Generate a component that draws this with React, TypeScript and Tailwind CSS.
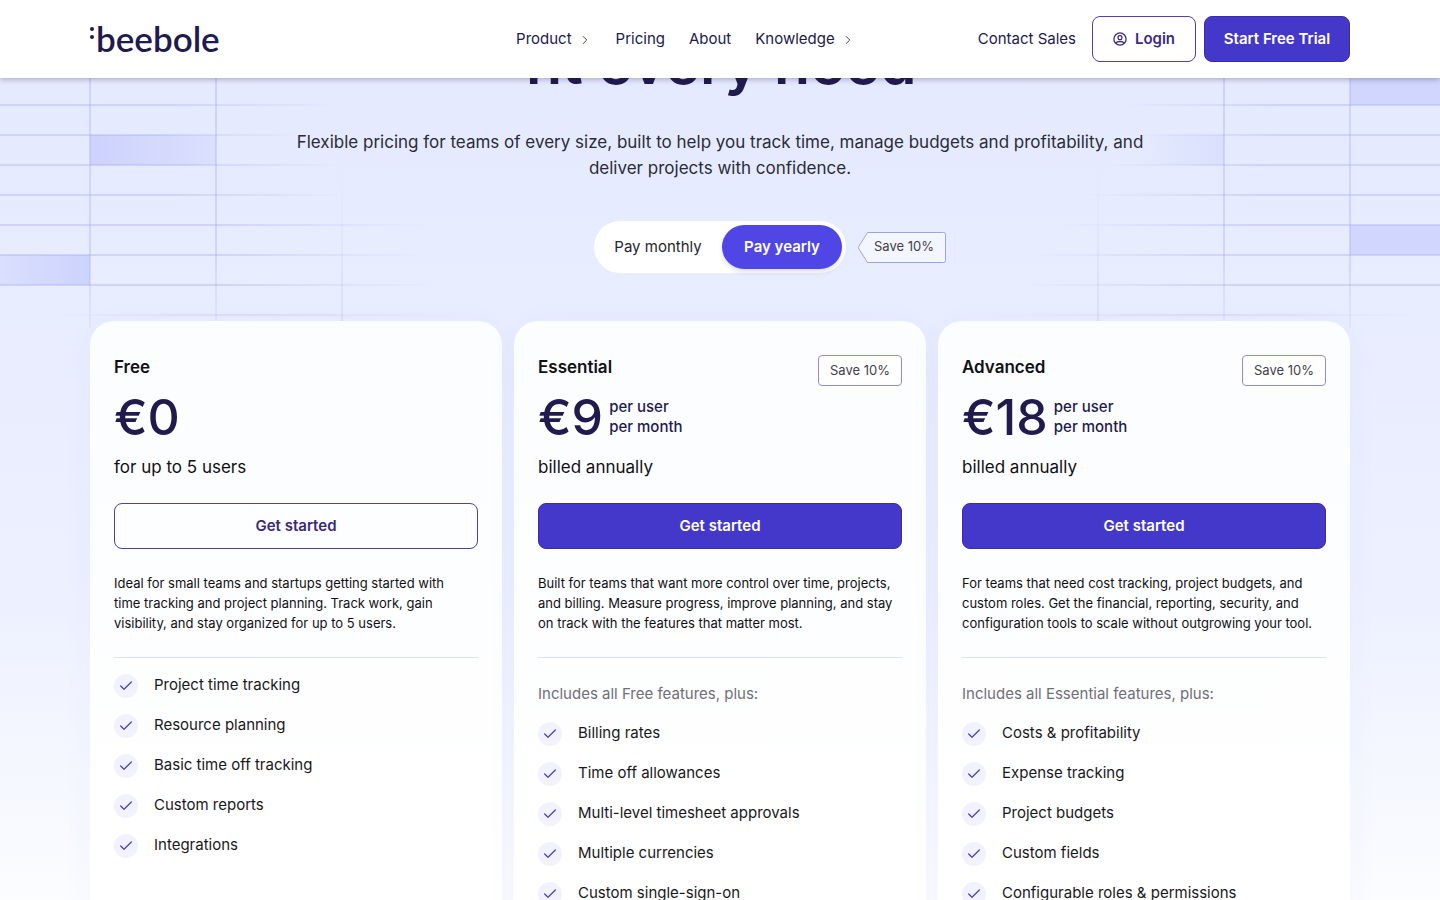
import React, { useState } from 'react';
import { Check, ChevronRight } from 'lucide-react';

interface Plan {
  name: string;
  price: string;
  perUser: boolean;
  note: string;
  description: string;
  includes?: string;
  features: string[];
}

const plans: Plan[] = [
  {
    name: 'Free',
    price: '€0',
    perUser: false,
    note: 'for up to 5 users',
    description:
      'Ideal for small teams and startups getting started with time tracking and project planning. Track work, gain visibility, and stay organized for up to 5 users.',
    features: [
      'Project time tracking',
      'Resource planning',
      'Basic time off tracking',
      'Custom reports',
      'Integrations',
    ],
  },
  {
    name: 'Essential',
    price: '€9',
    perUser: true,
    note: 'billed annually',
    description:
      'Built for teams that want more control over time, projects, and billing. Measure progress, improve planning, and stay on track with the features that matter most.',
    includes: 'Includes all Free features, plus:',
    features: [
      'Billing rates',
      'Time off allowances',
      'Multi-level timesheet approvals',
      'Multiple currencies',
      'Custom single-sign-on',
    ],
  },
  {
    name: 'Advanced',
    price: '€18',
    perUser: true,
    note: 'billed annually',
    description:
      'For teams that need cost tracking, project budgets, and custom roles. Get the financial, reporting, security, and configuration tools to scale without outgrowing your tool.',
    includes: 'Includes all Essential features, plus:',
    features: [
      'Costs & profitability',
      'Expense tracking',
      'Project budgets',
      'Custom fields',
      'Configurable roles & permissions',
    ],
  },
];

const navItems = [
  { label: 'Product', menu: true },
  { label: 'Pricing', menu: false },
  { label: 'About', menu: false },
  { label: 'Knowledge', menu: true },
];

const Logo: React.FC = () => (
  <a href="#" className="flex items-center text-[#211a4d]">
    <span className="flex flex-col gap-1 pb-3" aria-hidden="true">
      <span className="h-1 w-1 rounded-full bg-[#211a4d]" />
      <span className="h-1 w-1 rounded-full bg-[#211a4d]" />
    </span>
    <span className="pb-0.5 pl-0.5 font-['Lato',sans-serif] text-[35px] leading-10 font-semibold">beebole</span>
  </a>
);

const UserCircle: React.FC = () => (
  <svg
    width="14"
    height="14"
    viewBox="0 0 14 14"
    fill="none"
    stroke="currentColor"
    strokeWidth="1.3"
    aria-hidden="true"
  >
    <circle cx="7" cy="7" r="6.1" />
    <rect x="5.1" y="3.6" width="3.8" height="4" rx="1.6" />
    <path d="M2.8 11.2c.7-1.2 2-1.7 4.2-1.7s3.5.5 4.2 1.7" />
  </svg>
);

const Header: React.FC = () => (
  <header className="relative z-10 bg-white shadow-[0_1px_6px_rgba(30,27,75,0.35)]">
    <div className="mx-auto flex h-[78px] max-w-[1260px] items-center">
      <Logo />
      <nav className="mr-[123px] ml-auto flex items-center gap-6">
        {navItems.map(item => (
          <a key={item.label} href="#" className="flex items-center gap-1.5 text-[15px] text-[#211a4d]">
            {item.label}
            {item.menu && <ChevronRight className="mt-0.5 h-3.5 w-3.5" strokeWidth={1.4} />}
          </a>
        ))}
      </nav>
      <div className="flex items-center gap-2">
        <a href="#" className="mr-2 text-[15px] text-[#211a4d]">
          Contact Sales
        </a>
        <a
          href="#"
          className="flex h-[46px] w-[104px] items-center justify-center gap-2 rounded-lg border border-[#4f3fc0] text-[15px] font-semibold text-[#3a2a85]"
        >
          <UserCircle />
          Login
        </a>
        <a
          href="#"
          className="flex h-[46px] w-[146px] items-center justify-center rounded-lg border border-[#3a2ba8] bg-[#4338ca] text-[15px] font-semibold text-white"
        >
          Start Free Trial
        </a>
      </div>
    </div>
  </header>
);

// Rows are 30px apart, each one fades out towards the middle of the page
const rows = [
  { y: 27, left: 340, right: 1120 },
  { y: 57, left: 310, right: 1130 },
  { y: 87, left: 350, right: 1095 },
  { y: 117, left: 350, right: 1080 },
  { y: 147, left: 430, right: 1060 },
  { y: 177, left: 430, right: 1030 },
  { y: 207, left: 440, right: 1020 },
];

const TimesheetGrid: React.FC = () => (
  <svg
    className="absolute top-[78px] left-1/2 -translate-x-1/2"
    width="1440"
    height="250"
    viewBox="0 0 1440 250"
    aria-hidden="true"
  >
    <defs>
      <linearGradient id="fadeRight">
        <stop offset="0.5" stopColor="#a5a8f8" stopOpacity="0.36" />
        <stop offset="1" stopColor="#a5a8f8" stopOpacity="0" />
      </linearGradient>
      <linearGradient id="fadeLeft">
        <stop offset="0" stopColor="#a5a8f8" stopOpacity="0" />
        <stop offset="0.5" stopColor="#a5a8f8" stopOpacity="0.36" />
      </linearGradient>
      <linearGradient id="fadeEnds">
        <stop offset="0" stopColor="#a5a8f8" stopOpacity="0" />
        <stop offset="0.5" stopColor="#a5a8f8" stopOpacity="0.22" />
        <stop offset="1" stopColor="#a5a8f8" stopOpacity="0" />
      </linearGradient>
      <linearGradient id="fadeUp" x1="0" y1="0" x2="0" y2="1">
        <stop offset="0" stopColor="#9ea6ec" stopOpacity="0" />
        <stop offset="1" stopColor="#9ea6ec" stopOpacity="0.2" />
      </linearGradient>
      <linearGradient id="fadeDown" x1="0" y1="0" x2="0" y2="1">
        <stop offset="0" stopColor="#9ea6ec" stopOpacity="0.32" />
        <stop offset="0.7" stopColor="#9ea6ec" stopOpacity="0.32" />
        <stop offset="1" stopColor="#9ea6ec" stopOpacity="0.1" />
      </linearGradient>
      <linearGradient id="cellRight">
        <stop offset="0" stopColor="#cdd2fd" />
        <stop offset="1" stopColor="#dbe0fe" />
      </linearGradient>
      <linearGradient id="cellLeft">
        <stop offset="0" stopColor="#dadffe" />
        <stop offset="1" stopColor="#ccd3fd" />
      </linearGradient>
      <linearGradient id="cellFade">
        <stop offset="0.3" stopColor="#dadffe" stopOpacity="0" />
        <stop offset="1" stopColor="#dadffe" />
      </linearGradient>
    </defs>
    <rect x="90" y="57" width="126" height="30" fill="url(#cellRight)" />
    <rect x="0" y="177" width="90" height="30" fill="url(#cellLeft)" />
    <rect x="1098" y="57" width="126" height="30" fill="url(#cellFade)" />
    <rect x="1350" y="0" width="90" height="27" fill="#d0d6fd" />
    <rect x="1350" y="147" width="90" height="30" fill="#d0d6fd" />
    {rows.map(row => (
      <g key={row.y}>
        <rect x="0" y={row.y - 1} width={row.left} height="2" fill="url(#fadeRight)" />
        <rect x={row.right} y={row.y - 1} width={1440 - row.right} height="2" fill="url(#fadeLeft)" />
      </g>
    ))}
    <rect x="40" y="236" width="420" height="2" fill="url(#fadeEnds)" />
    <rect x="990" y="236" width="440" height="2" fill="url(#fadeEnds)" />
    {[90, 216, 1224, 1350].map(x => (
      <rect key={x} x={x - 1} y="0" width="2" height="250" fill="url(#fadeDown)" />
    ))}
    {[342, 1098].map(x => (
      <rect key={x} x={x - 1} y="87" width="2" height="163" fill="url(#fadeUp)" />
    ))}
  </svg>
);

interface BillingToggleProps {
  yearly: boolean;
  onChange: (yearly: boolean) => void;
}

const BillingToggle: React.FC<BillingToggleProps> = ({ yearly, onChange }) => {
  const active = 'bg-[#4f46e5] font-semibold text-white shadow-md';
  const idle = 'text-[#26262e]';

  return (
    <div className="mt-10 grid grid-cols-[1fr_auto_1fr] items-center gap-3">
      <span />
      <div className="flex rounded-full bg-white p-1">
        <button
          aria-pressed={!yearly}
          onClick={() => onChange(false)}
          className={`h-11 w-[124px] rounded-full pr-1 text-[15px] ${yearly ? idle : active}`}
        >
          Pay monthly
        </button>
        <button
          aria-pressed={yearly}
          onClick={() => onChange(true)}
          className={`h-11 w-[120px] rounded-full text-[15px] ${yearly ? active : idle}`}
        >
          Pay yearly
        </button>
      </div>
      <div className="relative flex h-[31px] w-[88px] items-center justify-center pl-1">
        <svg className="absolute inset-0" width="88" height="31" viewBox="0 0 88 31" aria-hidden="true">
          <path
            d="M9.5 .5H85.5a2 2 0 0 1 2 2v26a2 2 0 0 1-2 2H9.5L1 17a2.5 2.5 0 0 1 0-3L9.5 .5Z"
            fill="#f4f6ff"
            stroke="#a5a0ec"
          />
        </svg>
        <span className="relative text-[13px] text-[#3f3f4a]">Save 10%</span>
      </div>
    </div>
  );
};

const PlanCard: React.FC<{ plan: Plan }> = ({ plan }) => {
  const buttonStyle = plan.perUser
    ? 'border-[#3a2ba8] bg-[#4338ca] text-white'
    : 'border-[#4f3fa8] text-[#3a2a75]';

  return (
    <section className="rounded-3xl bg-linear-to-b from-[#fcfdff] to-white px-6 pt-8 pb-16 shadow-[0_4px_32px_rgba(79,70,229,0.04)]">
      <div className="flex h-7 items-start justify-between">
        <h2 className="text-[17px] leading-7 font-semibold text-[#101014]">{plan.name}</h2>
        {plan.perUser && (
          <span className="mt-0.5 rounded border border-[#8f8ae6] bg-white px-[11px] py-1 text-[13px] leading-[21px] text-[#3f3f4a]">
            Save 10%
          </span>
        )}
      </div>
      <div className="mt-2 flex h-14 items-center gap-1.5 text-[#211a4d]">
        <span className="text-[50px] leading-14 font-medium">{plan.price}</span>
        {plan.perUser && (
          <span className="text-[15px] leading-5 font-medium">
            per user
            <br />
            per month
          </span>
        )}
      </div>
      <p className="mt-2 text-[17px] leading-7 text-[#101014]">{plan.note}</p>
      <button
        className={`mt-[22px] h-[46px] w-full rounded-lg border text-[15px] font-semibold ${buttonStyle}`}
      >
        Get started
      </button>
      <p className="mt-6 pr-1.5 text-[13px] leading-5 text-[#101014]">{plan.description}</p>
      <hr className="mt-6 border-[#dcdfee]" />
      {plan.includes && <p className="mt-6 text-[15px] leading-6 text-[#6f6f78]">{plan.includes}</p>}
      <ul className="mt-4 space-y-4">
        {plan.features.map(feature => (
          <li key={feature} className="flex items-start gap-4 text-[15px] leading-[22px] text-[#18181b]">
            <span className="flex h-6 w-6 items-center justify-center rounded-full bg-[#f2f2fe]">
              <Check className="h-4 w-4 text-[#4f46c8]" strokeWidth={2} />
            </span>
            {feature}
          </li>
        ))}
      </ul>
    </section>
  );
};

export default function App() {
  const [yearly, setYearly] = useState(true);

  return (
    <div className="relative min-h-screen overflow-hidden bg-linear-to-b from-[#e3e9ff] via-[#ecf0ff] via-60% to-white font-['Inter',sans-serif]">
      <TimesheetGrid />
      <Header />
      <main className="relative mx-auto -mt-[51px] max-w-[1260px]">
        <h1 className="text-center text-[59px] leading-[72px] font-semibold text-[#211a4d]">fit every need</h1>
        <p className="mx-auto mt-[30px] max-w-[860px] text-center text-[17px] leading-[26px] text-[#2b2b38]">
          Flexible pricing for teams of every size, built to help you track time, manage budgets and profitability, and
          deliver projects with confidence.
        </p>
        <BillingToggle yearly={yearly} onChange={setYearly} />
        <div className="mt-12 grid grid-cols-3 gap-3">
          {plans.map(plan => (
            <PlanCard key={plan.name} plan={plan} />
          ))}
        </div>
      </main>
    </div>
  );
}
